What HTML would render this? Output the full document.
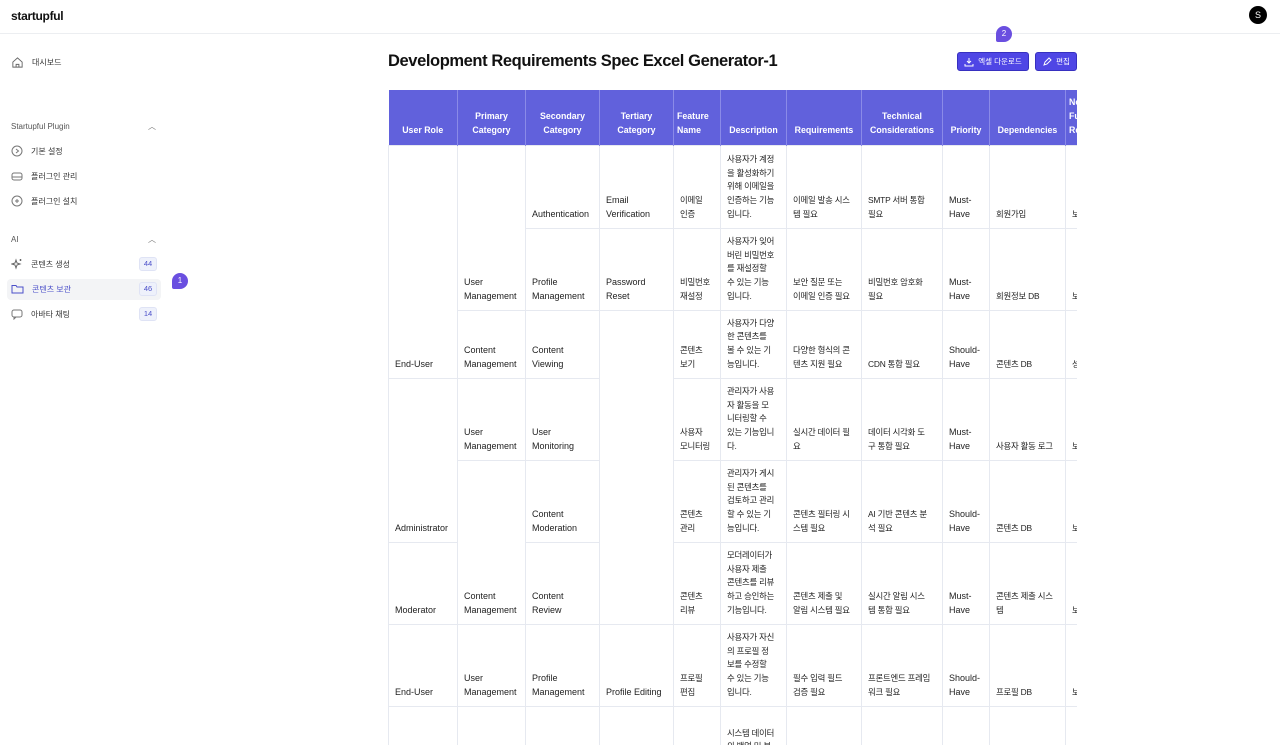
<!DOCTYPE html>
<html><head><meta charset="utf-8"><style>
*{box-sizing:border-box;margin:0;padding:0}
html,body{width:1280px;height:745px;overflow:hidden}
body{background:#fff;font-family:"Liberation Sans","Noto Sans CJK KR",sans-serif;color:#111;position:relative}
.top{position:absolute;left:0;top:0;width:1280px;height:34px;border-bottom:1px solid #eceef1}
.logo{position:absolute;left:11px;top:9px;font-size:12px;font-weight:bold;letter-spacing:-0.3px}
.av{position:absolute;left:1249px;top:6px;width:18px;height:18px;border-radius:50%;background:#000;color:#fff;font-size:9px;text-align:center;line-height:18px}
.nav{position:absolute;left:11px;font-size:8px;color:#333;display:flex;align-items:center}
.nav svg{margin-right:8px}
.sec{position:absolute;left:11px;font-size:8px;color:#555}
.chev{position:absolute;left:148px;font-size:8px;color:#777}
.badge{position:absolute;left:139px;width:18px;height:14px;border:1px solid #dfe3f5;background:#eef1fb;border-radius:3px;font-size:7.5px;color:#4b4fc9;text-align:center;line-height:12px}
.act{position:absolute;left:7px;top:279px;width:154px;height:21px;background:#f3f4f6;border-radius:4px}
.bub{position:absolute;width:16px;height:16px;border-radius:50% 50% 50% 2px;background:#6a4fe0;color:#fff;font-size:8px;text-align:center;line-height:16px}
h1{position:absolute;left:388px;top:52px;font-size:16.5px;font-weight:bold;letter-spacing:-0.4px}
.btn{position:absolute;top:52px;height:19px;background:#4f46e5;border:1px solid #3730c0;border-radius:3px;color:#fff;font-size:7.5px;display:flex;align-items:center;justify-content:center;gap:4px}
.wrap{position:absolute;left:388px;top:90px;width:689px;height:655px;overflow:hidden}
table{border-collapse:collapse;table-layout:fixed;width:769px}
th{background:#6161dc;color:#fff;font-size:8.8px;font-weight:bold;height:55px;vertical-align:bottom;padding:0 3px 7px;border-right:1px solid #8a8ae8;line-height:13.7px;text-align:center;white-space:nowrap;overflow:hidden}
td{font-size:9px;line-height:13.7px;vertical-align:bottom;padding:0 6px 6px;border:1px solid #e6e9f0;color:#222;white-space:nowrap;overflow:hidden}
td.k{font-size:8.4px;letter-spacing:-0.2px}
</style></head><body>
<div class="top"><div class="logo">startupful</div><div class="av">S</div></div>
<div class="nav" style="top:56px"><svg width="13" height="13" viewBox="0 0 14 14" fill="none" stroke="#666" stroke-width="1"><path d="M2 6.5L7 2l5 4.5V12H2z M5.5 12V9h3v3"/></svg>대시보드</div>
<div class="sec" style="top:122px">Startupful Plugin</div><div class="chev" style="top:121px">︿</div>
<div class="nav" style="top:145px"><svg width="12" height="12" viewBox="0 0 12 12" fill="none" stroke="#777"><circle cx="6" cy="6" r="5"/><path d="M5 4l2.5 2L5 8"/></svg>기본 설정</div>
<div class="nav" style="top:170px"><svg width="12" height="12" viewBox="0 0 12 12" fill="none" stroke="#777"><rect x="1" y="3" width="10" height="7" rx="2"/><path d="M1 7h10"/></svg>플러그인 관리</div>
<div class="nav" style="top:195px"><svg width="12" height="12" viewBox="0 0 12 12" fill="none" stroke="#777"><circle cx="6" cy="6" r="5"/><path d="M6 4v4M4 6h4"/></svg>플러그인 설치</div>
<div class="sec" style="top:235px">AI</div><div class="chev" style="top:234px">︿</div>
<div class="nav" style="top:258px"><svg width="12" height="12" viewBox="0 0 12 12" fill="none" stroke="#666"><path d="M5 2l1 3 3 1-3 1-1 3-1-3-3-1 3-1z M9.5 1v2M8.5 2h2"/></svg>콘텐츠 생성</div>
<div class="badge" style="top:257px">44</div>
<div class="act"></div>
<div class="nav" style="top:283px;color:#4b4fc9"><svg width="13" height="12" viewBox="0 0 13 12" fill="none" stroke="#4b4fc9"><path d="M1 2.5h4l1 1.5h6v6H1z"/></svg>콘텐츠 보관</div>
<div class="badge" style="top:282px">46</div>
<div class="nav" style="top:308px"><svg width="12" height="12" viewBox="0 0 12 12" fill="none" stroke="#777"><rect x="1" y="2" width="10" height="7" rx="2"/><path d="M3 9v2l2-2"/></svg>아바타 채팅</div>
<div class="badge" style="top:307px">14</div>
<div class="bub" style="left:172px;top:273px">1</div>
<div class="bub" style="left:996px;top:26px">2</div>
<h1>Development Requirements Spec Excel Generator-1</h1>
<div class="btn" style="left:957px;width:72px"><svg width="10" height="10" viewBox="0 0 10 10" fill="none" stroke="#fff"><path d="M5 1v5M3 4l2 2 2-2M1 7v2h8V7"/></svg>엑셀 다운로드</div>
<div class="btn" style="left:1035px;width:42px"><svg width="10" height="10" viewBox="0 0 10 10" fill="none" stroke="#fff"><path d="M2 8l1-3 4-4 2 2-4 4z"/></svg>편집</div>
<div class="wrap"><table>
<colgroup><col style="width:69px"><col style="width:68px"><col style="width:74px"><col style="width:74px"><col style="width:47px"><col style="width:66px"><col style="width:75px"><col style="width:81px"><col style="width:47px"><col style="width:76px"><col style="width:92px"></colgroup>
<tr><th>User Role</th><th>Primary<br>Category</th><th>Secondary<br>Category</th><th>Tertiary<br>Category</th><th style="text-align:left">Feature<br>Name</th><th>Description</th><th>Requirements</th><th>Technical<br>Considerations</th><th>Priority</th><th>Dependencies</th><th style="text-align:left">Non-<br>Functional<br>Requirements</th></tr>
<tr style="height:83px"><td rowspan="3">End-User</td><td rowspan="2">User<br>Management</td><td>Authentication</td><td>Email<br>Verification</td><td class="k">이메일<br>인증</td><td class="k">사용자가 계정<br>을 활성화하기<br>위해 이메일을<br>인증하는 기능<br>입니다.</td><td class="k">이메일 발송 시스<br>템 필요</td><td class="k">SMTP 서버 통합<br>필요</td><td>Must-<br>Have</td><td class="k">회원가입</td><td class="k">보안</td></tr>
<tr style="height:82px"><td>Profile<br>Management</td><td>Password<br>Reset</td><td class="k">비밀번호<br>재설정</td><td class="k">사용자가 잊어<br>버린 비밀번호<br>를 재설정할<br>수 있는 기능<br>입니다.</td><td class="k">보안 질문 또는<br>이메일 인증 필요</td><td class="k">비밀번호 암호화<br>필요</td><td>Must-<br>Have</td><td class="k">회원정보 DB</td><td class="k">보안</td></tr>
<tr style="height:68px"><td>Content<br>Management</td><td>Content<br>Viewing</td><td rowspan="4"></td><td class="k">콘텐츠<br>보기</td><td class="k">사용자가 다양<br>한 콘텐츠를<br>볼 수 있는 기<br>능입니다.</td><td class="k">다양한 형식의 콘<br>텐츠 지원 필요</td><td class="k">CDN 통합 필요</td><td>Should-<br>Have</td><td class="k">콘텐츠 DB</td><td class="k">성능</td></tr>
<tr style="height:82px"><td rowspan="2">Administrator</td><td>User<br>Management</td><td>User<br>Monitoring</td><td class="k">사용자<br>모니터링</td><td class="k">관리자가 사용<br>자 활동을 모<br>니터링할 수<br>있는 기능입니<br>다.</td><td class="k">실시간 데이터 필<br>요</td><td class="k">데이터 시각화 도<br>구 통합 필요</td><td>Must-<br>Have</td><td class="k">사용자 활동 로그</td><td class="k">보안</td></tr>
<tr style="height:82px"><td rowspan="2">Content<br>Management</td><td>Content<br>Moderation</td><td class="k">콘텐츠<br>관리</td><td class="k">관리자가 게시<br>된 콘텐츠를<br>검토하고 관리<br>할 수 있는 기<br>능입니다.</td><td class="k">콘텐츠 필터링 시<br>스템 필요</td><td class="k">AI 기반 콘텐츠 분<br>석 필요</td><td>Should-<br>Have</td><td class="k">콘텐츠 DB</td><td class="k">보안</td></tr>
<tr style="height:82px"><td>Moderator</td><td>Content<br>Review</td><td class="k">콘텐츠<br>리뷰</td><td class="k">모더레이터가<br>사용자 제출<br>콘텐츠를 리뷰<br>하고 승인하는<br>기능입니다.</td><td class="k">콘텐츠 제출 및<br>알림 시스템 필요</td><td class="k">실시간 알림 시스<br>템 통합 필요</td><td>Must-<br>Have</td><td class="k">콘텐츠 제출 시스<br>템</td><td class="k">보안</td></tr>
<tr style="height:82px"><td>End-User</td><td>User<br>Management</td><td>Profile<br>Management</td><td>Profile Editing</td><td class="k">프로필<br>편집</td><td class="k">사용자가 자신<br>의 프로필 정<br>보를 수정할<br>수 있는 기능<br>입니다.</td><td class="k">필수 입력 필드<br>검증 필요</td><td class="k">프론트엔드 프레임<br>워크 필요</td><td>Should-<br>Have</td><td class="k">프로필 DB</td><td class="k">보안</td></tr>
<tr style="height:82px"><td>Admin</td><td>System<br>Management</td><td>Data<br>Backup</td><td></td><td class="k">백업 및<br>복구</td><td class="k">시스템 데이터<br>의 백업 및 복<br>구를 위한 기능<br>입니다.</td><td class="k">정기적인 백업 스<br>케줄 필요</td><td class="k">클라우드 스토리지<br>통합 필요</td><td>Must-<br>Have</td><td class="k">데이터베이스</td><td class="k">안정성</td></tr>
</table></div>
</body></html>
